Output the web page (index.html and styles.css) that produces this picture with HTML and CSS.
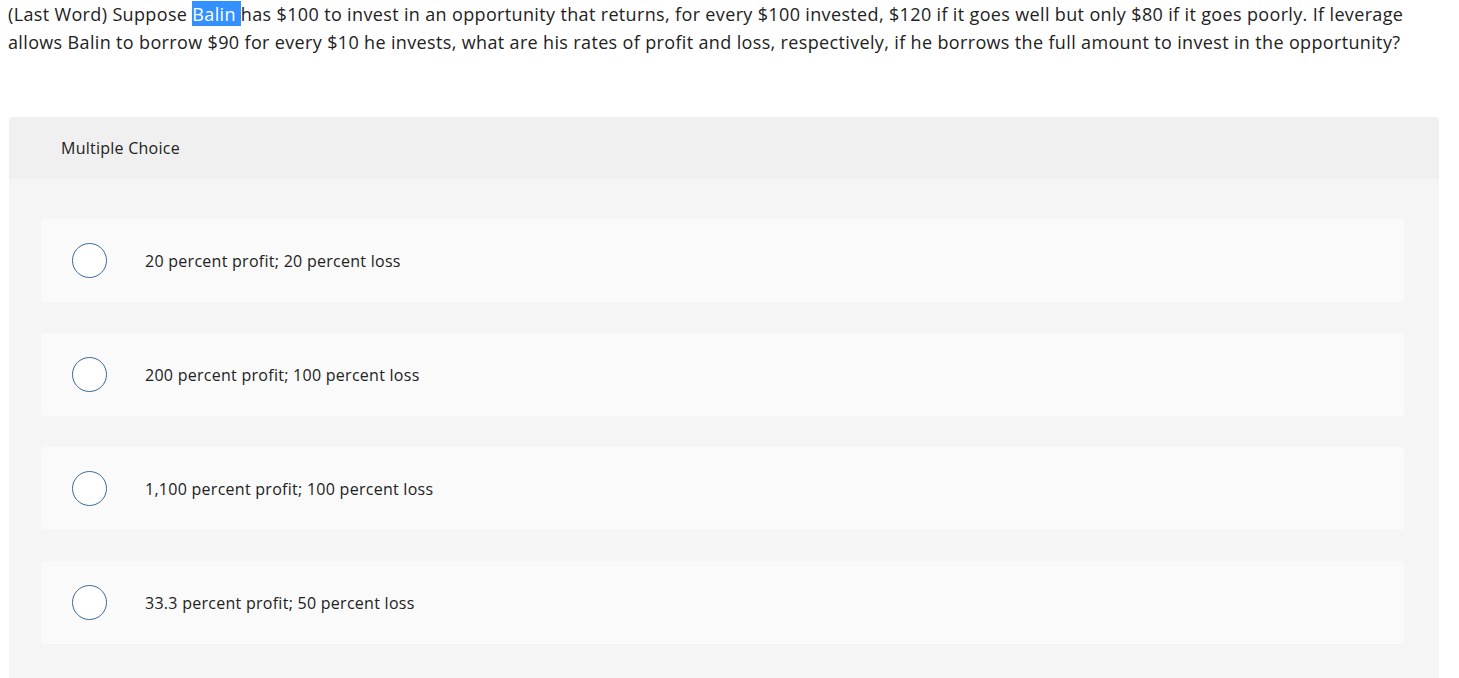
FILE: index.html
```html
<!DOCTYPE html>
<html>
<head>
<meta charset="utf-8">
<link rel="stylesheet" href="styles.css">
</head>
<body>
<p class="question">(Last Word) Suppose <span class="sel">Balin </span>has $100 to invest in an opportunity that returns, for every $100 invested, $120 if it goes well but only $80 if it goes poorly. If leverage allows Balin to borrow $90 for every $10 he invests, what are his rates of profit and loss, respectively, if he borrows the full amount to invest in the opportunity?</p>
<div class="card">
  <div class="card-head">Multiple Choice</div>
  <div class="card-body">
    <div class="option"><span class="radio"></span><span class="label">20 percent profit; 20 percent loss</span></div>
    <div class="option"><span class="radio"></span><span class="label">200 percent profit; 100 percent loss</span></div>
    <div class="option"><span class="radio"></span><span class="label">1,100 percent profit; 100 percent loss</span></div>
    <div class="option"><span class="radio"></span><span class="label">33.3 percent profit; 50 percent loss</span></div>
  </div>
</div>
</body>
</html>
```
FILE: styles.css
```css
html, body { margin: 0; padding: 0; background: #fff; }
body { font-family: "Open Sans", Lato, sans-serif; color: #222; }
.question {
  margin: 0;
  padding: 0 8px;
  font-size: 18px;
  line-height: 28px;
  letter-spacing: 0.35px;
  color: #222;
}
.sel { background: #3390ff; color: #fff; padding-top: 1px; }
.card {
  margin: 61px 20px 0 9px;
  border-radius: 4px 4px 0 0;
  overflow: hidden;
  background: #f5f5f5;
}
.card-head {
  background: #f0f0f0;
  height: 62px;
  display: flex;
  align-items: center;
  padding-left: 52px;
  font-size: 16px;
  letter-spacing: 0.25px;
  color: #222;
}
.card-body {
  padding: 40px 35px 40px 32px;
  display: flex;
  flex-direction: column;
  gap: 31px;
}
.option {
  background: #fafafa;
  border-radius: 4px;
  height: 83px;
  display: flex;
  align-items: center;
  padding-left: 31px;
}
.radio {
  width: 33px;
  height: 33px;
  border: 1.5px solid #3a6a9a;
  border-radius: 50%;
  background: #fff;
  flex: none;
}
.label {
  margin-left: 38px;
  font-size: 16px;
  letter-spacing: 0.27px;
  color: #222;
}
```
